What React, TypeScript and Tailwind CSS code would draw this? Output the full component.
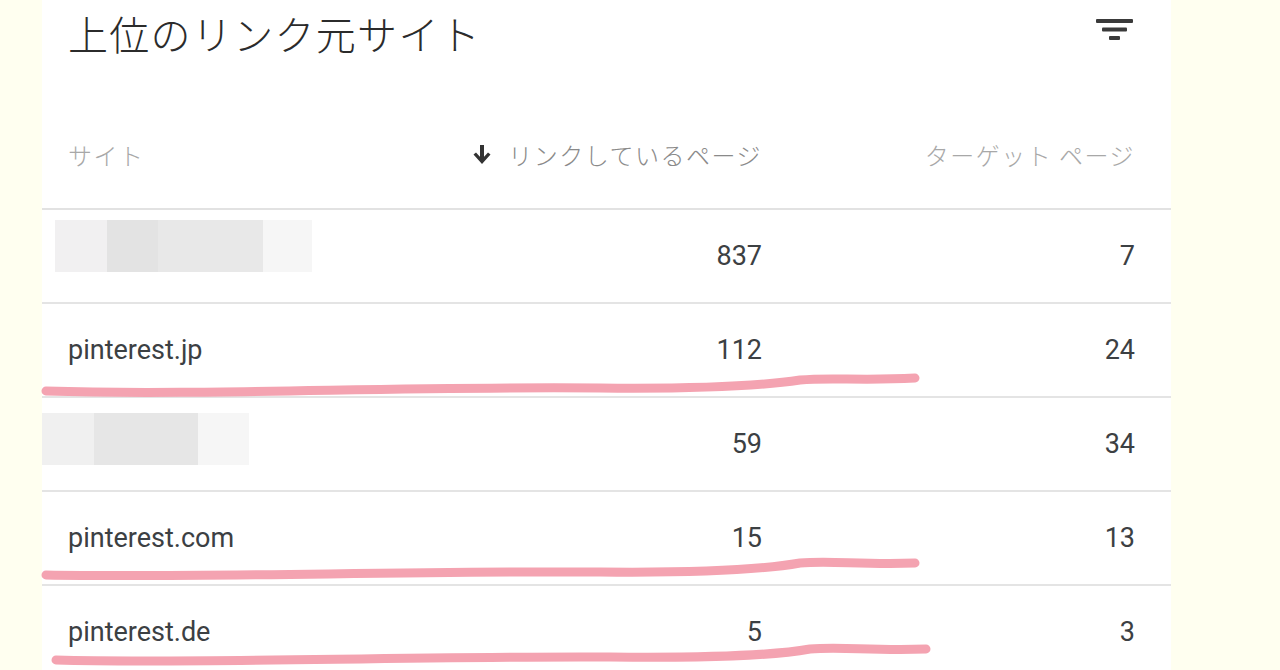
import React from 'react';

interface Row {
  site: string | null;
  blur?: { offset: number; top: number; parts: { w: number; color: string }[] };
  linking: number;
  target: number;
}

const rows: Row[] = [
  {
    site: null,
    blur: {
      offset: -13,
      top: 10,
      parts: [
        { w: 52, color: '#f1f0f1' },
        { w: 51, color: '#e3e3e3' },
        { w: 105, color: '#e8e8e8' },
        { w: 49, color: '#f6f6f6' },
      ],
    },
    linking: 837,
    target: 7,
  },
  { site: 'pinterest.jp', linking: 112, target: 24 },
  {
    site: null,
    blur: {
      offset: -26,
      top: 15,
      parts: [
        { w: 52, color: '#f0f0f0' },
        { w: 104, color: '#e6e6e6' },
        { w: 51, color: '#f6f6f6' },
      ],
    },
    linking: 59,
    target: 34,
  },
  { site: 'pinterest.com', linking: 15, target: 13 },
  { site: 'pinterest.de', linking: 5, target: 3 },
];

const jp = { fontFamily: '"Noto Sans CJK JP", "Noto Sans", sans-serif' };
const num = { fontFamily: 'Roboto, "Liberation Sans", sans-serif' };

const FilterIcon = () => (
  <svg width="37" height="22" viewBox="0 0 37 22" fill="#3a3a3a">
    <rect x="0" y="0" width="37" height="4" rx="1" />
    <rect x="6" y="8.5" width="25" height="4" rx="1" />
    <rect x="13" y="17" width="11" height="4" rx="1" />
  </svg>
);

const Underlines = () => (
  <svg
    className="pointer-events-none absolute left-0 top-0"
    width="1280"
    height="670"
    viewBox="0 0 1280 670"
    fill="none"
    stroke="#f4a3b1"
    strokeWidth="9"
    strokeLinecap="round"
  >
    <path d="M46 391 C 200 396, 400 386, 600 388 C 700 389, 760 386, 800 380 C 830 377, 860 381, 915 378" />
    <path d="M46 575 C 200 578, 400 571, 600 572 C 700 573, 760 570, 800 563 C 830 560, 860 565, 915 563" />
    <path d="M56 660 C 200 664, 400 656, 610 657 C 710 658, 770 656, 810 649 C 840 646, 870 651, 926 649" />
  </svg>
);

export default function App() {
  return (
    <div className="relative h-[670px] w-[1280px] overflow-hidden bg-[#fffff0]">
      <div className="ml-[42px] w-[1129px] bg-white">
        {/* title */}
        <div className="flex h-[66px] items-center justify-between pl-[26px] pr-[38px]">
          <h2
            className="text-[40px] font-light leading-none tracking-[1.3px] text-[#2b2b2b]"
            style={jp}
          >
            上位のリンク元サイト
          </h2>
          <div className="-mt-[6px]">
            <FilterIcon />
          </div>
        </div>

        {/* header */}
        <div className="h-[144px] border-b-2 border-[#e2e2e2] pl-[26px] pr-[36px] pt-[69px]">
          <div className="flex h-[40px] items-center text-[24px] font-light" style={jp}>
            <div className="w-[400px] tracking-[1.5px] text-[#a8a8a8]">サイト</div>
            <div className="flex w-[294px] items-center justify-end gap-[16px] text-[#8a8a8a]">
              <svg width="20" height="22" viewBox="0 0 20 22" fill="#333">
                <rect x="8" y="1" width="4" height="15" />
                <path d="M1.5 10.5 L10 20 L18.5 10.5 L16 8.5 L10 15 L4 8.5 Z" />
              </svg>
              <span className="tracking-[1.5px]">リンクしているページ</span>
            </div>
            <div className="flex-1 text-right tracking-[1.5px] text-[#a8a8a8]">ターゲット ページ</div>
          </div>
        </div>

        {/* rows */}
        {rows.map((r, i) => (
          <div
            key={i}
            className="flex h-[94px] items-center border-b-2 border-[#e4e4e4] pl-[26px] pr-[36px] text-[27px] text-[#3c4043]"
            style={num}
          >
            <div className="h-full w-[400px]">
              {r.site ? (
                <div className="flex h-full items-center">{r.site}</div>
              ) : (
                <div
                  className="flex h-[52px]"
                  style={{ marginLeft: r.blur!.offset, marginTop: r.blur!.top }}
                >
                  {r.blur!.parts.map((p, j) => (
                    <div key={j} style={{ width: p.w, backgroundColor: p.color }} />
                  ))}
                </div>
              )}
            </div>
            <div className="w-[294px] text-right">{r.linking}</div>
            <div className="flex-1 text-right">{r.target}</div>
          </div>
        ))}
      </div>
      <Underlines />
    </div>
  );
}
